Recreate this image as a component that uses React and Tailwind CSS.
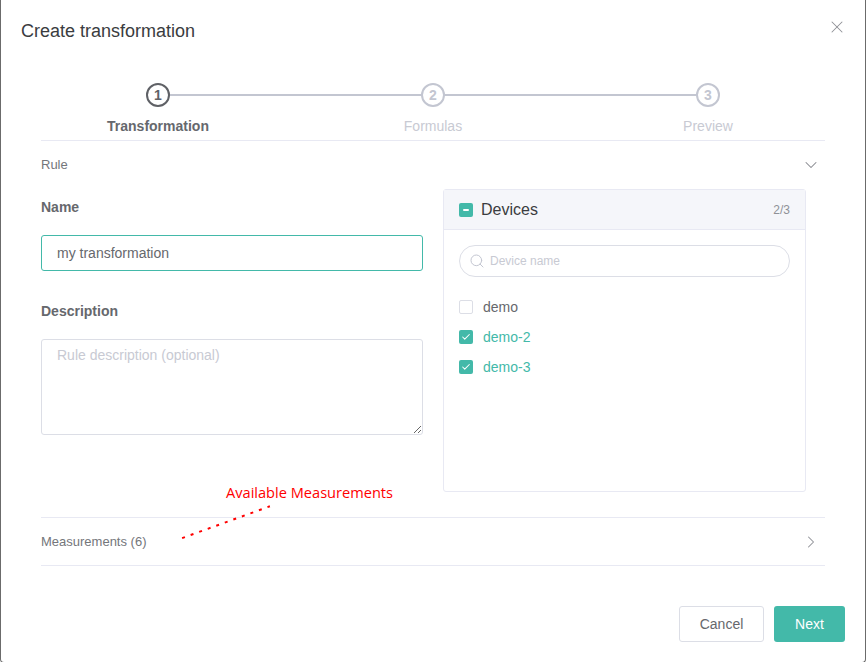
import { ChevronDown, ChevronRight, Search, X, Check } from "lucide-react";

const Step = ({ num, label, active }) => {
  return (
    <div className="w-[275px] flex flex-col items-center shrink-0">
      <div className={`size-6 rounded-full border-2 bg-white flex items-center justify-center text-[14px] font-bold ${active ? 'border-[#5f6166] text-[#5f6166]' : 'border-[#c3c6d1] text-[#c3c6d1]'}`}>
        {num}
      </div>
      <div className={`mt-[11px] text-[14px] leading-4 ${active ? 'font-bold text-[#66686d]' : 'text-[#c8cad3]'}`}>{label}</div>
    </div>
  )
}

const DeviceRow = ({ name, checked }) => {
  return (
    <div className="h-[30px] flex items-center">
      {checked
        ? <div className="size-[14px] rounded-[2px] bg-[#43b9a9] flex items-center justify-center"><Check size={10} strokeWidth={2.5} className="text-white" /></div>
        : <div className="size-[14px] rounded-[2px] border border-[#dcdee6] bg-white"></div>}
      <span className={`ml-[10px] text-[14px] ${checked ? 'text-[#43b9a9]' : 'text-[#66686d]'}`}>{name}</span>
    </div>
  )
}

const App = () => {
  return (
    <div className="relative w-[866px] h-[662px] overflow-hidden bg-white font-['Liberation_Sans',Arial,sans-serif]">
      <div className="h-[663px] border-x border-b border-[#6b6b6b] rounded-b-[4px] flex flex-col">

        {/* Title */}
        <div className="h-[83px] pl-5 pt-[19px] flex justify-between shrink-0">
          <div className="text-[18px] leading-[24px] text-[#3a3c40]">Create transformation</div>
          <button className="mr-[18px] -mt-[2px] h-[20px] self-start text-[#8f9197]"><X size={20} strokeWidth={1.25} /></button>
        </div>

        {/* Steps */}
        <div className="relative mx-[40px] flex justify-center shrink-0 h-[57px]">
          <div className="absolute top-[11px] left-[117px] w-[550px] h-[2px] bg-[#c3c6d1]"></div>
          <div className="relative flex w-[825px] justify-center">
            <Step num="1" label="Transformation" active />
            <Step num="2" label="Formulas" />
            <Step num="3" label="Preview" />
          </div>
        </div>

        {/* Rule */}
        <div className="mx-[40px] border-t border-[#e8e9f3] h-[49px] flex items-center justify-between shrink-0 text-[13px] text-[#74767b]">
          <span>Rule</span>
          <ChevronDown size={20} strokeWidth={1.25} className="mr-[4px] text-[#85878d]" />
        </div>

        <div className="ml-[40px] flex h-[303px] shrink-0">
          <div className="w-[382px] shrink-0">
            <div className="pt-[10px] h-[46px] text-[14px] leading-4 font-bold text-[#66686d]">Name</div>
            <input readOnly value="my transformation" className="w-full h-[36px] px-[15px] rounded-[3px] border border-[#43b9a9] text-[14px] text-[#66686d] outline-none" />
            <div className="mt-[32px] h-[36px] text-[14px] leading-4 font-bold text-[#66686d]">Description</div>
            <textarea placeholder="Rule description (optional)" className="block w-full h-[96px] px-[15px] py-[5px] rounded-[3px] border border-[#dcdee6] text-[14px] leading-[20px] text-[#66686d] outline-none placeholder:text-[#c8cad3]"></textarea>
          </div>

          {/* Devices */}
          <div className="ml-[20px] w-[363px] shrink-0 border border-[#e8e9f3] rounded-[3px]">
            <div className="h-[40px] px-[15px] bg-[#f5f6fa] border-b border-[#e8e9f3] flex items-center">
              <div className="size-[14px] rounded-[2px] bg-[#43b9a9] flex items-center justify-center">
                <div className="w-[6px] h-[2px] bg-white rounded-[1px]"></div>
              </div>
              <span className="ml-[8px] text-[16px] text-[#3a3c40]">Devices</span>
              <span className="ml-auto text-[12px] text-[#8f9197]">2/3</span>
            </div>
            <div className="px-[15px] pt-[15px]">
              <div className="h-[32px] rounded-full border border-[#dcdee6] flex items-center pl-[9px]">
                <Search size={16} strokeWidth={1.5} className="text-[#c3c6d1]" />
                <span className="ml-[5px] text-[12px] text-[#c8cad3]">Device name</span>
              </div>
              <div className="mt-[15px]">
                <DeviceRow name="demo" />
                <DeviceRow name="demo-2" checked />
                <DeviceRow name="demo-3" checked />
              </div>
            </div>
          </div>
        </div>

        {/* Measurements */}
        <div className="mt-[25px] mx-[40px] h-[49px] border-y border-[#e8e9f3] flex items-center justify-between shrink-0 text-[13px] text-[#74767b]">
          <span>Measurements (6)</span>
          <ChevronRight size={20} strokeWidth={1.25} className="mr-[4px] text-[#8f9197]" />
        </div>

        {/* Footer */}
        <div className="mt-[40px] pr-5 flex justify-end gap-[10px] shrink-0">
          <button className="w-[85px] h-[36px] rounded-[3px] border border-[#dcdee6] bg-white text-[14px] text-[#66686d]">Cancel</button>
          <button className="w-[71px] h-[36px] rounded-[3px] bg-[#43b9a9] text-[14px] text-white">Next</button>
        </div>
      </div>

      {/* Annotation drawn over the screenshot */}
      <div className="absolute left-[226px] top-[482px] text-[14.6px] leading-5 text-[#ff0000] font-['Open_Sans',sans-serif]">Available Measurements</div>
      <svg className="absolute left-[180px] top-[504px]" width="92" height="36" viewBox="0 0 92 36">
        <path d="M2.1 34.1 L89.9 2.3" stroke="#ff0000" strokeWidth="2" strokeDasharray="3 6.08" fill="none" />
      </svg>
    </div>
  )
}

export default App
